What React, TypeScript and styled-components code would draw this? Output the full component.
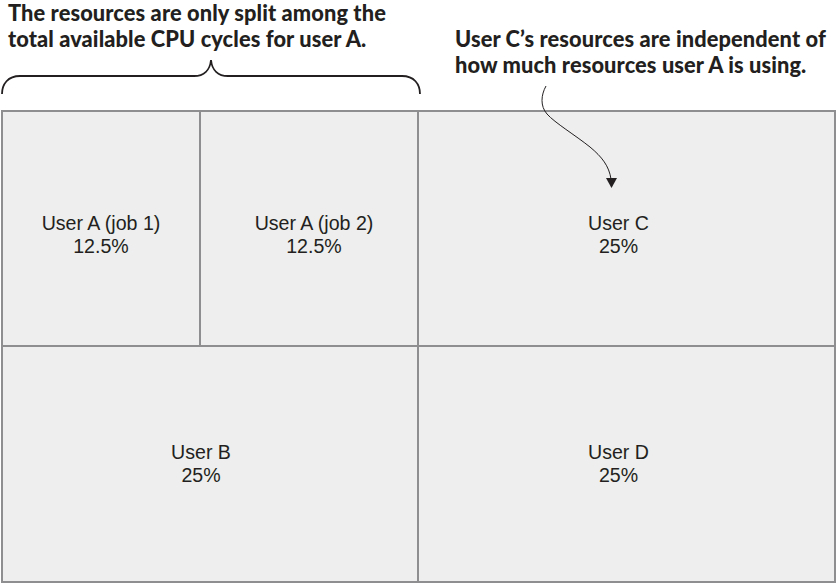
import React from 'react';
import styled, { createGlobalStyle } from 'styled-components';

const GlobalStyle = createGlobalStyle`
    html, body {
        margin: 0;
        padding: 0;
        background: #ffffff;
    }
    body {
        width: 836px;
        height: 583px;
        overflow: hidden;
        font-family: 'Liberation Sans', Arial, sans-serif;
        color: #231f20;
    }
`;

const Page = styled.div`
    position: relative;
    width: 836px;
    height: 583px;
`;

const Header = styled.div`
    display: flex;
    height: 110px;
`;

const Annotation = styled.div<{ $width?: number; $indent: number }>`
    display: flex;
    flex-direction: column;
    width: ${(p) => (p.$width ? `${p.$width}px` : 'auto')};
    flex: ${(p) => (p.$width ? 'none' : '1')};
    > .text {
        padding-left: ${(p) => p.$indent}px;
        font-family: Lato, 'Open Sans', sans-serif;
        font-weight: 900;
        font-size: 21.8px;
        line-height: 26px;
        letter-spacing: 0.1px;
        color: #231f20;
        white-space: nowrap;
    }
`;

const LeftText = styled.div`
    margin-top: 0px;
`;

const RightText = styled.div`
    margin-top: 26px;
`;

const Brace = styled.svg`
    display: block;
    margin-top: 6px;
`;

const Arrow = styled.svg`
    position: absolute;
    left: 530px;
    top: 80px;
    overflow: visible;
`;

const Grid = styled.div`
    display: grid;
    grid-template-columns: 196px 216px 1fr;
    grid-template-rows: 233px 1fr;
    gap: 2px;
    padding: 2px;
    margin-left: 1px;
    width: 835px;
    height: 473px;
    box-sizing: border-box;
    background: #8e8e90;
`;

const Cell = styled.div<{ $span?: number; $shift?: number; $top?: number }>`
    grid-column: span ${(p) => p.$span ?? 1};
    display: flex;
    flex-direction: column;
    align-items: center;
    justify-content: center;
    background: #edeeed;
    padding-top: ${(p) => p.$top ?? 0}px;
    padding-left: ${(p) => Math.max(p.$shift ?? 0, 0) * 2}px;
    padding-right: ${(p) => Math.max(-(p.$shift ?? 0), 0) * 2}px;
    font-family: 'Liberation Sans', Arial, Helvetica, sans-serif;
    font-size: 19.6px;
    line-height: 23px;
    color: #231f20;
    text-align: center;
`;

interface Share {
    name: string;
    pct: string;
    span?: number;
    shift?: number;
    top?: number;
}

const shares: Share[] = [
    { name: 'User A (job 1)', pct: '12.5%', top: 13 },
    { name: 'User A (job 2)', pct: '12.5%', shift: 5, top: 13 },
    { name: 'User C', pct: '25%', shift: -8, top: 13 },
    { name: 'User B', pct: '25%', span: 2, shift: -9 },
    { name: 'User D', pct: '25%', shift: -8 },
];

export default function App() {
    return (
        <Page>
            <GlobalStyle />
            <Header>
                <Annotation $width={422} $indent={8}>
                    <LeftText className="text">
                        The resources are only split among the
                        <br />
                        total available CPU cycles for user A.
                    </LeftText>
                    <Brace width="422" height="38" viewBox="0 60 422 38">
                        <path
                            d="M2,96 C2,86 8,78 20,78 L194,78 C204,78 210,72 211,62 C212,72 218,78 228,78 L402,78 C414,78 420,86 420,96"
                            fill="none"
                            stroke="#231f20"
                            strokeWidth="1.8"
                        />
                    </Brace>
                </Annotation>
                <Annotation $indent={33}>
                    <RightText className="text">
                        User C’s resources are independent of
                        <br />
                        how much resources user A is using.
                    </RightText>
                </Annotation>
            </Header>
            <Grid>
                {shares.map((s) => (
                    <Cell key={s.name} $span={s.span} $shift={s.shift} $top={s.top}>
                        <div>{s.name}</div>
                        <div>{s.pct}</div>
                    </Cell>
                ))}
            </Grid>
            <Arrow width="100" height="110" viewBox="530 80 100 110">
                <path
                    d="M546,86 C541,95 540,106 547,114 C555,123 575,135 590,147 C602,157 609,166 611,179"
                    fill="none"
                    stroke="#231f20"
                    strokeWidth="1"
                />
                <polygon points="606,178 617,178 611.5,188" fill="#231f20" />
            </Arrow>
        </Page>
    );
}
